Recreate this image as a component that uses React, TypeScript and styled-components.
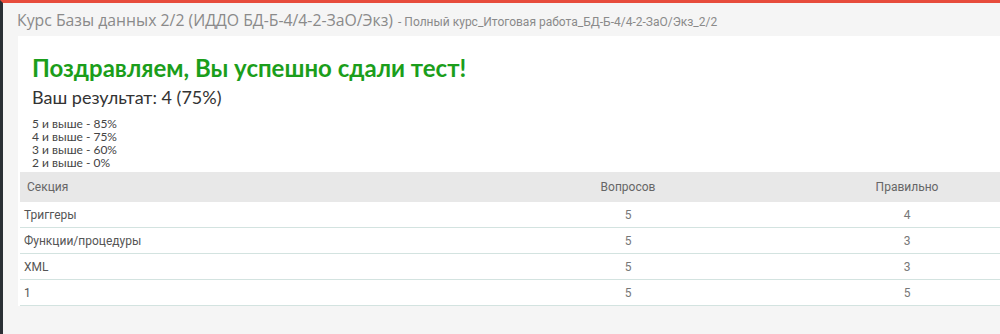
import * as React from "react";
import styled, { createGlobalStyle } from "styled-components";

const GlobalStyle = createGlobalStyle`
  html, body {
    margin: 0;
    padding: 0;
    background: #f5f5f5;
    overflow: hidden;
  }
`;

const Page = styled.div`
  width: 1000px;
  height: 334px;
  display: flex;
  flex-direction: column;
  border-top: 3px solid #e74c3c;
  border-left: 3px solid #2b3035;
  box-sizing: border-box;
  background: #f5f5f5;
  overflow: hidden;
`;

const TitleBar = styled.div`
  display: flex;
  align-items: baseline;
  gap: 5px;
  height: 33px;
  padding: 6px 0 0 14px;
  box-sizing: border-box;
  white-space: nowrap;
`;

const CourseName = styled.span`
  font-family: "Open Sans", "DejaVu Sans", sans-serif;
  font-size: 15.8px;
  color: #8a8a8a;
`;

const TestName = styled.span`
  font-family: Roboto, "Liberation Sans", sans-serif;
  font-size: 12px;
  color: #8a8a8a;
`;

const Panel = styled.div`
  margin-left: 15px;
  background: #fff;
  padding: 15px 0 0 0;
  width: 1040px;
`;

const Summary = styled.div`
  padding: 0 0 0 14px;
`;

const Congrats = styled.h2`
  margin: 0;
  font-family: Lato, "Noto Sans", sans-serif;
  font-weight: 700;
  font-size: 24px;
  line-height: 34px;
  color: #1b9e1b;
`;

const Result = styled.div`
  font-family: Lato, "Noto Sans", sans-serif;
  font-size: 18px;
  line-height: 24px;
  color: #333;
  margin-bottom: 8px;
`;

const Grades = styled.div`
  font-family: Lato, "Noto Sans", sans-serif;
  font-size: 12px;
  line-height: 13px;
  color: #444;
`;

const Table = styled.div`
  display: grid;
  grid-template-columns: 470px 276px 282px;
  margin: 3px 0 0 2px;
  font-family: Roboto, "Liberation Sans", sans-serif;
  font-size: 12px;
  color: #666;
`;

const HeadCell = styled.div<{ center?: boolean }>`
  background: #e8e8e8;
  height: 30px;
  display: flex;
  align-items: center;
  justify-content: ${(p) => (p.center ? "center" : "flex-start")};
  padding-left: ${(p) => (p.center ? "0" : "7px")};
`;

const Cell = styled.div<{ center?: boolean }>`
  height: 26px;
  display: flex;
  align-items: center;
  justify-content: ${(p) => (p.center ? "center" : "flex-start")};
  padding-left: ${(p) => (p.center ? "0" : "4px")};
  border-bottom: 1px solid #d3e3e0;
  box-sizing: border-box;
  color: ${(p) => (p.center ? "#777" : "#555")};
`;

const grades = ["5 и выше - 85%", "4 и выше - 75%", "3 и выше - 60%", "2 и выше - 0%"];

const rows = [
  { name: "Триггеры", total: 5, right: 4 },
  { name: "Функции/процедуры", total: 5, right: 3 },
  { name: "XML", total: 5, right: 3 },
  { name: "1", total: 5, right: 5 },
];

export default function App() {
  return (
    <>
      <GlobalStyle />
      <Page>
        <TitleBar>
          <CourseName>Курс Базы данных 2/2 (ИДДО БД-Б-4/4-2-ЗаО/Экз)</CourseName>
          <TestName>- Полный курс_Итоговая работа_БД-Б-4/4-2-ЗаО/Экз_2/2</TestName>
        </TitleBar>
        <Panel>
          <Summary>
            <Congrats>Поздравляем, Вы успешно сдали тест!</Congrats>
            <Result>Ваш результат: 4 (75%)</Result>
            <Grades>
              {grades.map((g) => (
                <div key={g}>{g}</div>
              ))}
            </Grades>
          </Summary>
          <Table>
            <HeadCell>Секция</HeadCell>
            <HeadCell center>Вопросов</HeadCell>
            <HeadCell center>Правильно</HeadCell>
            {rows.map((r) => (
              <React.Fragment key={r.name}>
                <Cell>{r.name}</Cell>
                <Cell center>{r.total}</Cell>
                <Cell center>{r.right}</Cell>
              </React.Fragment>
            ))}
          </Table>
        </Panel>
      </Page>
    </>
  );
}
